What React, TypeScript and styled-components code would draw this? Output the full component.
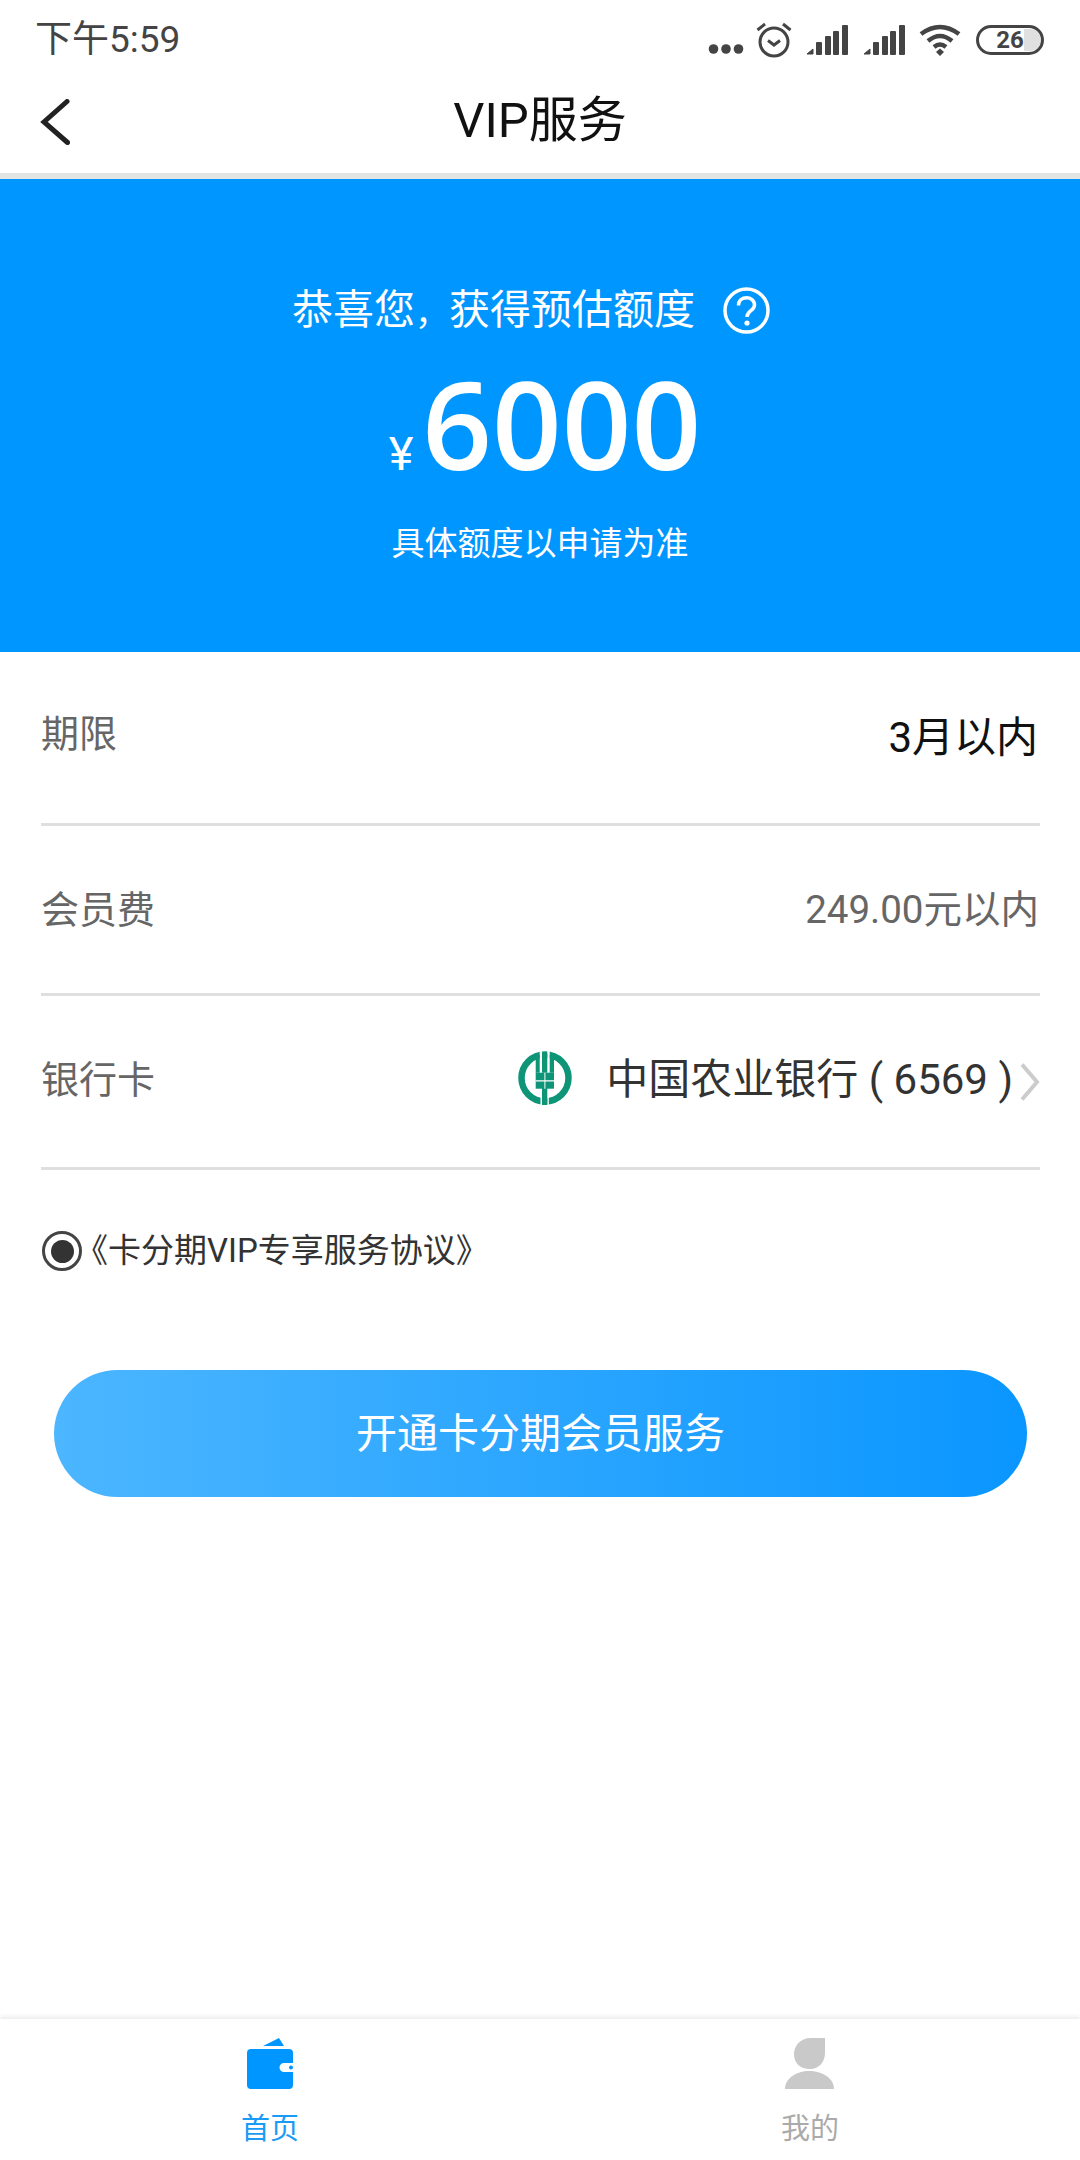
import React from "react";
import styled, { createGlobalStyle } from "styled-components";

const Global = createGlobalStyle`
  html, body { margin: 0; padding: 0; background: #fff; }
  * { box-sizing: border-box; }
  body { font-family: Roboto, "Noto Sans CJK SC", sans-serif; }
`;

const Page = styled.div`
  width: 1080px;
  height: 2160px;
  display: flex;
  flex-direction: column;
  background: #fff;
  overflow: hidden;
`;

const StatusBar = styled.div`
  height: 78px;
  padding: 2px 36px 0 35px;
  display: flex;
  align-items: center;
  justify-content: space-between;
  flex: none;
`;

const Clock = styled.span`
  font-size: 37px;
  line-height: 42px;
  color: #444;
`;

const StatusIcons = styled.div`
  display: flex;
  align-items: center;
  height: 76px;
`;

const StatusIcon = styled.svg<{ $gap: number; $drop?: number }>`
  display: block;
  flex: none;
  margin-left: ${(p) => p.$gap}px;
  margin-top: ${(p) => p.$drop ?? 0}px;
`;

const Header = styled.header`
  height: 95px;
  flex: none;
  padding: 0 40px;
  display: flex;
  align-items: center;
  position: relative;
`;

const BackIcon = styled.svg`
  display: block;
  margin-top: -8px;
`;

const Title = styled.h1`
  position: absolute;
  left: 0;
  right: 0;
  top: 0;
  margin: 0;
  text-align: center;
  font-size: 49px;
  font-weight: 400;
  line-height: 85px;
  color: #111;
`;

const HeaderGap = styled.div`
  height: 6px;
  flex: none;
  background: #e3e4e4;
`;

const Hero = styled.section`
  height: 473px;
  flex: none;
  background: #0096ff;
  color: #fff;
  display: flex;
  flex-direction: column;
  align-items: center;
  padding-top: 103px;
`;

const HeroTop = styled.div`
  display: flex;
  align-items: center;
  height: 56px;
  font-size: 41px;
  line-height: 56px;
  margin-right: 18px;
`;

const Comma = styled.span`
  font-size: 34px;
  line-height: 46px;
  margin-top: 5px;
  flex: none;
`;

const HelpIcon = styled.svg`
  margin-left: 28px;
  flex: none;
  display: block;
`;

const AmountLine = styled.div`
  display: flex;
  align-items: baseline;
  margin-top: 5px;
  height: 160px;
  margin-left: 10px;
`;

const Yen = styled.span`
  font-size: 47px;
  line-height: 160px;
  margin-right: 9px;
`;

const Amount = styled.span`
  font-family: "Open Sans", "Noto Sans", sans-serif;
  font-size: 122px;
  line-height: 160px;
  font-weight: 600;
`;

const HeroNote = styled.div`
  font-size: 33px;
  line-height: 46px;
  margin-top: 18px;
`;

const Form = styled.div`
  padding: 0 40px 0 41px;
  flex: none;
`;

const Row = styled.div<{ $h: number }>`
  height: ${(p) => p.$h}px;
  border-bottom: 3px solid #dfdfdf;
  display: flex;
  justify-content: space-between;
  align-items: flex-start;
`;

const RowLabel = styled.span<{ $top: number }>`
  font-size: 38px;
  line-height: 54px;
  color: #666;
  margin-top: ${(p) => p.$top}px;
`;

const RowValue = styled.span<{ $top: number; $dark?: boolean }>`
  font-size: ${(p) => (p.$dark ? 42 : 38.5)}px;
  line-height: 54px;
  color: ${(p) => (p.$dark ? "#111" : "#666")};
  margin-top: ${(p) => p.$top}px;
  margin-right: ${(p) => (p.$dark ? 2 : 1)}px;
`;

const BankValue = styled.div`
  display: flex;
  align-items: center;
  margin-top: 53px;
  height: 62px;
`;

const BankLogo = styled.svg`
  display: block;
  flex: none;
  margin-top: -4px;
`;

const BankName = styled.span`
  font-size: 42px;
  line-height: 62px;
  color: #333;
  margin-left: 34px;
  white-space: nowrap;
`;

const Chevron = styled.svg`
  display: block;
  margin-left: 7px;
  margin-top: 4px;
  flex: none;
`;

const Agreement = styled.div`
  display: flex;
  align-items: center;
  margin: 61px 0 0 42px;
  height: 40px;
  flex: none;
`;

const Radio = styled.span`
  width: 40px;
  height: 40px;
  border-radius: 50%;
  border: 3px solid #444;
  display: flex;
  align-items: center;
  justify-content: center;
  flex: none;
`;

const RadioDot = styled.span`
  width: 23px;
  height: 23px;
  border-radius: 50%;
  background: #333;
`;

const AgreementText = styled.span`
  font-size: 33px;
  line-height: 40px;
  color: #333;
  white-space: nowrap;
  margin-left: -7px;
`;

const OpenButton = styled.button`
  display: block;
  flex: none;
  margin: 99px 0 0 54px;
  width: 973px;
  height: 127px;
  border: 0;
  border-radius: 64px;
  background: linear-gradient(90deg, #4cb6ff 0%, #0a96ff 100%);
  color: #fff;
  font: inherit;
  font-size: 41px;
  padding: 0 0 8px;
`;

const TabBar = styled.nav`
  margin-top: auto;
  height: 141px;
  flex: none;
  display: grid;
  grid-template-columns: 1fr 1fr;
  background: #fff;
  box-shadow: 0 -2px 5px rgba(0, 0, 0, 0.09);
`;

const Tab = styled.div<{ $active?: boolean }>`
  display: flex;
  flex-direction: column;
  align-items: center;
  padding-top: 19px;
  color: ${(p) => (p.$active ? "#1a9bf5" : "#aaa")};
  font-size: 29px;
  line-height: 40px;
`;

const TabIcon = styled.svg`
  display: block;
  margin-bottom: 19px;
`;

function Signal({ gap }: { gap: number }) {
  return (
    <StatusIcon $gap={gap} width="42" height="30" viewBox="0 0 42 30">
      <path d="M1 29 L7 24 V29 Z" fill="#444" stroke="#444" strokeWidth="1" strokeLinejoin="round" />
      <rect x="10" y="17" width="6" height="13" rx="1" fill="#444" />
      <rect x="19" y="11" width="6" height="19" rx="1" fill="#444" />
      <rect x="27" y="6" width="6" height="24" rx="1" fill="#444" />
      <rect x="36" y="0" width="6" height="30" rx="1" fill="#444" />
    </StatusIcon>
  );
}

export default function App() {
  return (
    <Page>
      <Global />
      <StatusBar>
        <Clock>下午5:59</Clock>
        <StatusIcons>
          <StatusIcon $gap={0} $drop={17} width="36" height="12" viewBox="0 0 36 12">
            <circle cx="5.5" cy="6" r="4.8" fill="#444" />
            <circle cx="18" cy="6" r="4.8" fill="#444" />
            <circle cx="30.5" cy="6" r="4.8" fill="#444" />
          </StatusIcon>
          <StatusIcon $gap={12} width="36" height="36" viewBox="0 0 36 36">
            <circle cx="18" cy="20" r="14" fill="none" stroke="#444" strokeWidth="3" />
            <path d="M12 18.5 L18 23 L24 18.5" fill="none" stroke="#444" strokeWidth="3" />
            <path d="M1.5 8 L9 2 M34.5 8 L27 2" fill="none" stroke="#444" strokeWidth="3" />
          </StatusIcon>
          <Signal gap={14} />
          <Signal gap={15} />
          <StatusIcon $gap={14} width="42" height="32" viewBox="0 0 42 32">
            <path d="M2 10 Q21 -4 40 10" fill="none" stroke="#444" strokeWidth="4.5" />
            <path d="M9 17 Q21 7 33 17" fill="none" stroke="#444" strokeWidth="4.5" />
            <path d="M15 23 Q21 18 27 23" fill="none" stroke="#444" strokeWidth="4.5" />
            <path d="M17 28 L21 24.5 L25 28 L21 32 Z" fill="#444" />
          </StatusIcon>
          <StatusIcon $gap={15} width="68" height="30" viewBox="0 0 68 30">
            <path d="M48 4 H54 A11 11 0 0 1 54 26 H48 Z" fill="#e0e0e0" />
            <rect x="1.5" y="1.5" width="65" height="27" rx="13.5" fill="none" stroke="#444" strokeWidth="3" />
            <text x="34" y="23" textAnchor="middle" fontFamily="Roboto, sans-serif" fontWeight="700" fontSize="24" fill="#444">26</text>
          </StatusIcon>
        </StatusIcons>
      </StatusBar>

      <Header>
        <BackIcon width="30" height="46" viewBox="0 0 30 46">
          <path d="M27 2.5 L4 23 L27.5 43.5" fill="none" stroke="#222" strokeWidth="5" strokeLinecap="round" />
        </BackIcon>
        <Title>VIP服务</Title>
      </Header>
      <HeaderGap />

      <Hero>
        <HeroTop>
          <span>恭喜您</span>
          <Comma>，</Comma>
          <span>获得预估额度</span>
          <HelpIcon width="47" height="47" viewBox="0 0 47 47">
            <circle cx="23.5" cy="23.5" r="21.5" fill="none" stroke="#fff" strokeWidth="3.5" />
            <path d="M15.5 18.5 C15.5 8 31.5 8.5 31.5 18 C31.5 24 24 23.5 24 30" fill="none" stroke="#fff" strokeWidth="3.5" />
            <circle cx="24" cy="36" r="2.6" fill="#fff" />
          </HelpIcon>
        </HeroTop>
        <AmountLine>
          <Yen>¥</Yen>
          <Amount>6000</Amount>
        </AmountLine>
        <HeroNote>具体额度以申请为准</HeroNote>
      </Hero>

      <Form>
        <Row $h={174}>
          <RowLabel $top={55}>期限</RowLabel>
          <RowValue $top={59} $dark>3月以内</RowValue>
        </Row>
        <Row $h={170}>
          <RowLabel $top={57}>会员费</RowLabel>
          <RowValue $top={57}>249.00元以内</RowValue>
        </Row>
        <Row $h={174}>
          <RowLabel $top={57}>银行卡</RowLabel>
          <BankValue>
            <BankLogo width="54" height="54" viewBox="0 0 54 54">
              <circle cx="27" cy="27" r="23.5" fill="none" stroke="#0e9577" strokeWidth="6.5" />
              <path d="M21.7 0 H24 V21.7 H21.7 Z M29.3 0 H31.7 V21.7 H29.3 Z M22.5 37.7 H24 V54 H22.5 Z M29.3 37.7 H30.8 V54 H29.3 Z" fill="#fff" />
              <path d="M17.7 4 H21.7 V21.7 H17.7 Z M31.7 4 H36 V21.7 H31.7 Z M24 2.3 H29.3 V21.7 H24 Z M24 37 H29.3 V54 H24 Z" fill="#0e9577" />
              <path d="M17.7 21.7 H36 V37.7 H17.7 Z" fill="#0e9577" />
              <path d="M26.4 21.7 H27.4 V37.7 H26.4 Z M17.7 29.3 H36 V30.5 H17.7 Z" fill="#fff" />
            </BankLogo>
            <BankName>中国农业银行 ( 6569 )</BankName>
            <Chevron width="20" height="38" viewBox="0 0 20 38">
              <path d="M2 1.5 L17 19 L2 36.5" fill="none" stroke="#ccc" strokeWidth="4" />
            </Chevron>
          </BankValue>
        </Row>
      </Form>

      <Agreement>
        <Radio><RadioDot /></Radio>
        <AgreementText>《卡分期VIP专享服务协议》</AgreementText>
      </Agreement>

      <OpenButton>开通卡分期会员服务</OpenButton>

      <TabBar>
        <Tab $active>
          <TabIcon width="46" height="52" viewBox="0 0 46 52">
            <path d="M16 8 L32 0 L37 8 Z" fill="#0096ff" />
            <path fillRule="evenodd" d="M4 11 H42 Q46 11 46 15 V25 H37 A4.5 4.5 0 0 0 37 34 H46 V47 Q46 51 42 51 H4 Q0 51 0 47 V15 Q0 11 4 11 Z" fill="#0096ff" />
            <circle cx="44" cy="29.5" r="2" fill="#0096ff" />
          </TabIcon>
          首页
        </Tab>
        <Tab>
          <TabIcon width="50" height="52" viewBox="0 0 50 52">
            <path d="M40 0 H26 C15 0 9 8 9 16 C9 25 15 31 25 31 C34 31 40 24 40 15 Z" fill="#c9c9c9" />
            <path d="M0 51 C0 40 12 33 24 33 C37 33 49 40 49 51 Z" fill="#c9c9c9" />
          </TabIcon>
          我的
        </Tab>
      </TabBar>
    </Page>
  );
}
